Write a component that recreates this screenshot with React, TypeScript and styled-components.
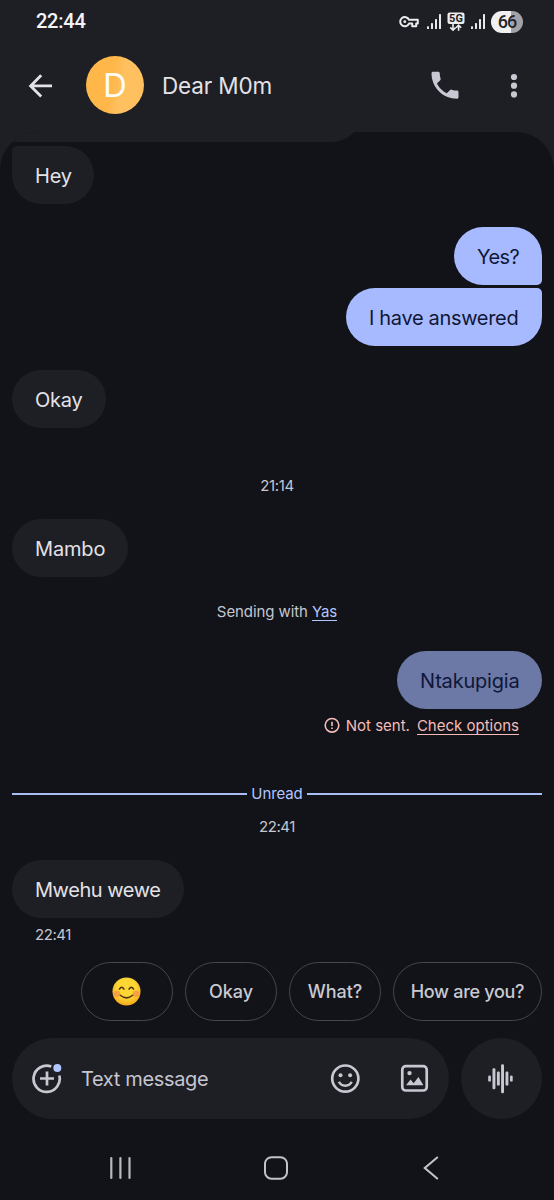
import React from "react";
import styled, { createGlobalStyle } from "styled-components";

const Global = createGlobalStyle`
  * { box-sizing: border-box; }
  body { margin: 0; background: #1e1f24; }
`;

const Screen = styled.div`
  width: 554px;
  height: 1200px;
  display: flex;
  flex-direction: column;
  background: #1e1f24;
  color: #e3e2e9;
  font-family: Inter, "Liberation Sans", sans-serif;
  overflow: hidden;
  svg { display: block; flex: none; }
`;

const StatusBar = styled.div`
  height: 42px;
  padding: 0 31px 0 36px;
  display: flex;
  align-items: center;
  justify-content: space-between;
`;

const Clock = styled.span`
  font: 500 20px/24px Roboto, sans-serif;
  letter-spacing: -0.25px;
  color: #f4f4f8;
`;

const StatusIcons = styled.div`
  display: flex;
  align-items: center;
  height: 22px;
  margin-top: 2px;
`;

const Spaced = styled.span<{ $ml: number }>`
  margin-left: ${(p) => p.$ml}px;
`;

const Battery = styled.span`
  width: 32px;
  height: 22px;
  margin-left: 5px;
  border-radius: 11px;
  background: linear-gradient(90deg, #f0f0f2 64%, #a2a2a6 64%);
  color: #25262a;
  font: 500 18px/22px Roboto, sans-serif;
  letter-spacing: -1px;
  text-align: center;
`;

const AppBar = styled.header`
  height: 90px;
  padding: 0 23px 4px 23px;
  display: flex;
  align-items: center;
`;

const Avatar = styled.div`
  width: 58px;
  height: 58px;
  margin-left: 28px;
  border-radius: 50%;
  background: linear-gradient(100deg, #ffb74a 45%, #ffc05f 60%);
  color: #fffdf5;
  display: flex;
  align-items: center;
  justify-content: center;
  font-size: 33px;
  line-height: 58px;
`;

const Title = styled.h1`
  flex: 1;
  margin: 1px 0 0 18px;
  font-size: 22.5px;
  line-height: 30px;
  font-weight: 400;
  letter-spacing: -0.15px;
`;

const Actions = styled.div`
  display: flex;
  align-items: center;
  gap: 34px;
`;

const Panel = styled.main`
  flex: 1;
  display: flex;
  flex-direction: column;
  padding: 0 12px;
  overflow: hidden;
  border-radius: 38px 38px 0 0;
  background: #111318;
`;

type BubbleProps = { $w: number; $top: number; $out?: boolean; $faded?: boolean; $radius?: string; $ls?: number };
const Bubble = styled.div<BubbleProps>`
  flex: none;
  align-self: ${(p) => (p.$out ? "flex-end" : "flex-start")};
  width: ${(p) => p.$w}px;
  height: 58px;
  margin-top: ${(p) => p.$top}px;
  padding: 0 23px;
  border-radius: ${(p) => p.$radius ?? "29px"};
  background: ${(p) => (p.$faded ? "#6c78a6" : p.$out ? "#a8baff" : "#1e1f24")};
  color: ${(p) => (p.$out ? "#0f1739" : "#e3e2e9")};
  font-size: 20px;
  line-height: 60px;
  letter-spacing: ${(p) => p.$ls ?? 0}px;
  white-space: nowrap;
`;

const Meta = styled.div<{ $top: number; $align?: string; $ls?: number }>`
  flex: none;
  height: 20px;
  margin-top: ${(p) => p.$top}px;
  padding: 0 23px;
  display: flex;
  align-items: center;
  justify-content: ${(p) => p.$align ?? "center"};
  color: #c5c6d0;
  font-size: 15px;
  line-height: 21px;
  letter-spacing: ${(p) => p.$ls ?? 0}px;
  white-space: nowrap;
`;

const ErrorMeta = styled(Meta)`
  color: #f5bcb8;
`;

const Link = styled.a<{ $ml: number }>`
  margin-left: ${(p) => p.$ml}px;
  height: 20px;
  border-bottom: 1.5px solid currentColor;
`;

const YasLink = styled(Link)`
  color: #b3c5ff;
`;

const Divider = styled.div`
  flex: none;
  margin-top: 48px;
  height: 20px;
  display: flex;
  align-items: center;
  gap: 4px;
  color: #b3c5ff;
  font-size: 15px;
  line-height: 21px;
  letter-spacing: -0.1px;
  &::before, &::after {
    content: "";
    flex: 1;
    height: 2px;
    margin-top: 1px;
    background: #a9bdf5;
  }
`;

const Chips = styled.div`
  flex: none;
  margin-top: 18px;
  display: flex;
  justify-content: flex-end;
  gap: 12px;
`;

const Chip = styled.button<{ $w: number; $ls?: number }>`
  width: ${(p) => p.$w}px;
  height: 59px;
  padding: 0;
  display: flex;
  align-items: center;
  justify-content: center;
  border: 1.5px solid #45464e;
  border-radius: 30px;
  background: transparent;
  color: #c9c9d2;
  font: 500 18px/24px Inter, sans-serif;
  letter-spacing: ${(p) => p.$ls ?? 0}px;
  white-space: nowrap;
`;

const Composer = styled.div`
  flex: none;
  margin-top: 17px;
  display: flex;
  gap: 12px;
`;

const Field = styled.div`
  flex: 1;
  height: 81px;
  padding: 0 20px 0 19px;
  display: flex;
  align-items: center;
  border-radius: 41px;
  background: #1e1f24;
`;

const Placeholder = styled.span`
  flex: 1;
  margin-left: 18px;
  color: #c5c6d0;
  font-size: 20px;
  line-height: 28px;
  letter-spacing: -0.35px;
`;

const Voice = styled.button`
  width: 81px;
  height: 81px;
  padding: 0 1px 0 0;
  border: 0;
  border-radius: 50%;
  background: #1e1f24;
  display: flex;
  align-items: center;
  justify-content: center;
`;

const NavBar = styled.nav`
  flex: none;
  height: 81px;
  padding: 17px 96px 0 93px;
  display: flex;
  align-items: center;
  justify-content: space-between;
`;

const Signal = () => (
  <svg width="15" height="16" viewBox="0 0 15 16" fill="#e9e9ec">
    <rect x="0" y="12.2" width="2" height="2.8" rx="0.6" />
    <rect x="4" y="9" width="2" height="6" rx="0.6" />
    <rect x="8" y="5" width="2" height="10" rx="0.6" />
    <rect x="12" y="0" width="2" height="15" rx="0.6" />
  </svg>
);

const KeyIcon = () => (
  <svg width="20" height="14" viewBox="0 0 20 14" fill="none" stroke="#ececef" strokeWidth="2" strokeLinejoin="round">
    <path d="M10 4.8h8.8v3.8h-1.6v2.6h-4V8.6H10a4.6 4.6 0 1 1 0-3.8z" />
    <circle cx="5.8" cy="6.7" r="1.4" fill="#ececef" stroke="none" />
  </svg>
);

const FiveG = () => (
  <svg width="18" height="20" viewBox="0 0 18 20">
    <rect x="0.5" y="0.5" width="17" height="11.5" rx="2" fill="#ececef" />
    <text x="9" y="10.2" textAnchor="middle" fontFamily="Roboto, sans-serif" fontWeight="700" fontSize="11" fill="#1e1f24">5G</text>
    <path d="M6 12v6M3.2 15.4 6 18.2l2.6-2.6M11.6 18.8v-5.6M9 15.8l2.6-2.6 2.6 2.6" fill="none" stroke="#ececef" strokeWidth="1.6" />
  </svg>
);

const Smile = () => (
  <svg width="30" height="30" viewBox="0 0 30 30">
    <defs>
      <radialGradient id="face" cx="50%" cy="40%" r="60%">
        <stop offset="0.55" stopColor="#fdd835" />
        <stop offset="1" stopColor="#f7a91e" />
      </radialGradient>
    </defs>
    <circle cx="14.5" cy="14.5" r="14" fill="url(#face)" />
    <circle cx="5" cy="16.7" r="3.3" fill="#f58a45" opacity="0.65" />
    <circle cx="24" cy="16.7" r="3.3" fill="#f58a45" opacity="0.65" />
    <path d="M7.4 12.2q2.3-4 4.6 0M17 12.2q2.3-4 4.6 0" fill="none" stroke="#553416" strokeWidth="1.5" strokeLinecap="round" />
    <path d="M8.3 18.3q6.2 5.2 12.4 0" fill="none" stroke="#553416" strokeWidth="1.5" strokeLinecap="round" />
  </svg>
);

const App = () => (
  <Screen>
    <Global />
    <StatusBar>
      <Clock>22:44</Clock>
      <StatusIcons>
        <KeyIcon />
        <Spaced $ml={8}><Signal /></Spaced>
        <Spaced $ml={5}><FiveG /></Spaced>
        <Spaced $ml={6}><Signal /></Spaced>
        <Battery>66</Battery>
      </StatusIcons>
    </StatusBar>
    <AppBar>
      <svg width="35" height="35" viewBox="0 0 35 35" fill="none" stroke="#e3e2e9" strokeWidth="2.8">
        <path d="M29 17.9H8M18.2 7.2 7.6 17.9l10.6 10.7" />
      </svg>
      <Avatar>D</Avatar>
      <Title>Dear M0m</Title>
      <Actions>
        <svg width="36" height="36" viewBox="0 0 24 24" fill="#c8c8d2">
          <path d="M20 15.7c-1.25 0-2.45-.2-3.57-.57a1 1 0 0 0-1.02.24l-2.2 2.2a15.1 15.1 0 0 1-6.59-6.58l2.2-2.21a1 1 0 0 0 .25-1.02A11.4 11.4 0 0 1 8.5 4.2c0-.55-.45-1-1-1H4c-.55 0-1 .45-1 1 0 9.39 7.61 17 17 17 .55 0 1-.45 1-1v-3.5c0-.55-.45-1-1-1z" />
        </svg>
        <svg width="34" height="34" viewBox="0 0 34 34" fill="#c8c8d2">
          <circle cx="17" cy="9" r="3.1" />
          <circle cx="17" cy="17.7" r="3.1" />
          <circle cx="17" cy="26.4" r="3.1" />
        </svg>
      </Actions>
    </AppBar>
    <Panel>
      <Bubble $w={349} $top={-48} $radius="29px 29px 29px 4px" />
      <Bubble $w={82} $top={4} $ls={-0.2} $radius="5px 29px 29px 29px">Hey</Bubble>
      <Bubble $w={88} $top={23} $out $ls={-0.6} $radius="29px 29px 5px 29px">Yes?</Bubble>
      <Bubble $w={196} $top={3} $out $ls={-0.33} $radius="29px 5px 29px 29px">I have answered</Bubble>
      <Bubble $w={94} $top={24} $ls={-0.25}>Okay</Bubble>
      <Meta $top={47} $ls={-0.4}>21:14</Meta>
      <Bubble $w={116} $top={24} $ls={-0.15}>Mambo</Bubble>
      <Meta $top={24} $ls={-0.08}>Sending with<YasLink $ml={4}>Yas</YasLink></Meta>
      <Bubble $w={145} $top={30} $out $faded $ls={-0.2}>Ntakupigia</Bubble>
      <ErrorMeta $top={6} $align="flex-end">
        <svg width="16" height="16" viewBox="0 0 16 16" fill="none" stroke="#f5bcb8" strokeWidth="1.6">
          <circle cx="8" cy="8.3" r="6.8" />
          <path d="M8 4.7v4.4M8 10.5v1.6" />
        </svg>
        <Spaced $ml={6}>Not sent.</Spaced>
        <Link $ml={7}>Check options</Link>
      </ErrorMeta>
      <Divider>Unread</Divider>
      <Meta $top={13} $ls={-0.4}>22:41</Meta>
      <Bubble $w={172} $top={24} $ls={-0.45}>Mwehu wewe</Bubble>
      <Meta $top={6} $align="flex-start" $ls={-0.45}>22:41</Meta>
      <Chips>
        <Chip $w={92} aria-label="Smile"><Smile /></Chip>
        <Chip $w={92}>Okay</Chip>
        <Chip $w={92}>What?</Chip>
        <Chip $w={149} $ls={-0.3}>How are you?</Chip>
      </Chips>
      <Composer>
        <Field>
          <svg width="32" height="32" viewBox="0 0 32 32" fill="none" stroke="#c8c8d2" strokeWidth="2.7">
            <path d="M20.3 3.6A13.1 13.1 0 1 0 28.3 12.5M16 8.5v14M9 15.5h14" />
            <circle cx="26.3" cy="5" r="4" fill="#b0c6ff" stroke="none" />
          </svg>
          <Placeholder>Text message</Placeholder>
          <svg width="30" height="30" viewBox="0 0 30 30" fill="none" stroke="#c8c8d2" strokeWidth="2.7">
            <circle cx="15.3" cy="14.6" r="13.1" />
            <circle cx="10.5" cy="11.2" r="2" fill="#c8c8d2" stroke="none" />
            <circle cx="20.1" cy="11.2" r="2" fill="#c8c8d2" stroke="none" />
            <path d="M8.9 17.8q2 3.9 6.4 3.9t6.4-3.9" strokeWidth="2.5" />
          </svg>
          <Spaced $ml={40}>
            <svg width="29" height="29" viewBox="0 0 28 28" fill="none" stroke="#c8c8d2" strokeWidth="2.6">
              <rect x="2.2" y="2" width="23.6" height="23.6" rx="3.5" />
              <circle cx="9.2" cy="8.8" r="2.1" fill="#c8c8d2" stroke="none" />
              <path d="M5.8 20.6l4.4-5.6 3 3.6 4.6-6 4.8 8z" fill="#c8c8d2" stroke="none" />
            </svg>
          </Spaced>
        </Field>
        <Voice aria-label="Voice message">
          <svg width="28" height="30" viewBox="0 0 28 30" fill="#c8c8d2">
            <rect x="1.2" y="11.6" width="2.7" height="6" rx="1.2" />
            <rect x="5.5" y="4.2" width="2.9" height="21" rx="1.2" />
            <rect x="9.9" y="7.6" width="2.9" height="14" rx="1.2" />
            <rect x="14.1" y="0.2" width="2.9" height="29" rx="1.2" />
            <rect x="18.5" y="7.6" width="2.9" height="14" rx="1.2" />
            <rect x="23" y="11.6" width="2.7" height="6" rx="1.2" />
          </svg>
        </Voice>
      </Composer>
      <NavBar>
        <svg width="30" height="24" viewBox="0 0 30 24" stroke="#b9b9bd" strokeWidth="2.2" strokeLinecap="round">
          <path d="M6.3 2v20M15.4 2v20M24.5 2v20" />
        </svg>
        <svg width="26" height="26" viewBox="0 0 26 26" fill="none" stroke="#c3c3c7" strokeWidth="2">
          <rect x="2" y="2.2" width="22" height="21.5" rx="6.5" />
        </svg>
        <svg width="30" height="26" viewBox="0 0 30 26" fill="none" stroke="#c3c3c7" strokeWidth="2.1" strokeLinecap="round">
          <path d="M21.2 2.5 8.8 13l12.4 10.5" />
        </svg>
      </NavBar>
    </Panel>
  </Screen>
);

export default App;
